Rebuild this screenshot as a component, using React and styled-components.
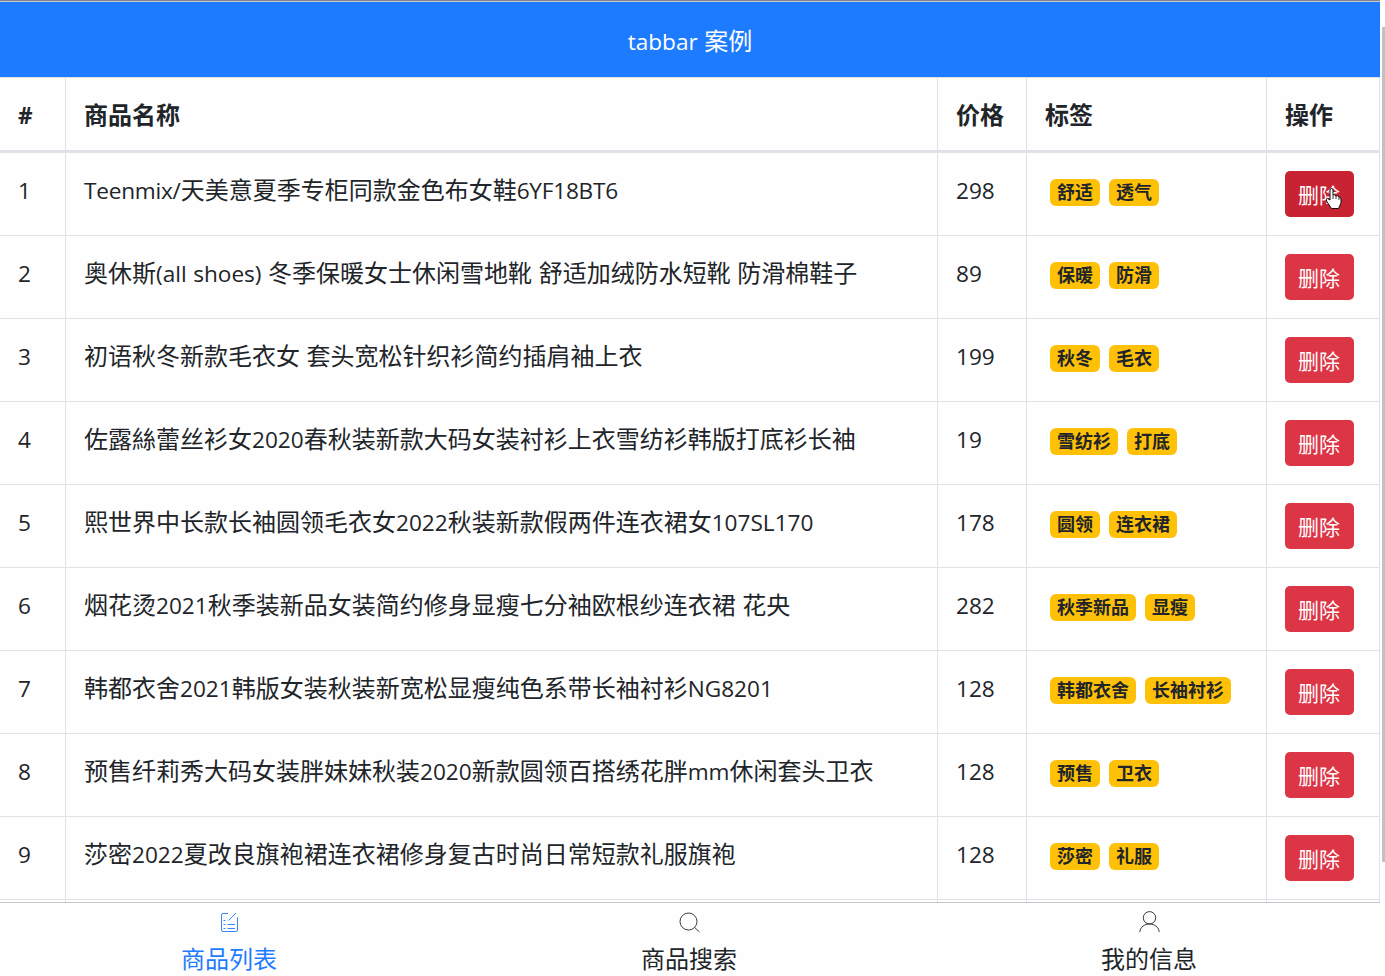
import React, { useState } from 'react';
import styled, { createGlobalStyle } from 'styled-components';

const GlobalStyle = createGlobalStyle`
  * {
    box-sizing: border-box;
  }

  body {
    margin: 0;
    background-color: #fefefe;
    color: #212529;
    font-family: 'Noto Sans CJK SC', sans-serif;
    font-size: 24px;
    line-height: 36px;
    overflow: hidden;
  }
`;

const Page = styled.div`
  display: flex;
  height: 976px;
`;

const Main = styled.div`
  display: flex;
  flex-direction: column;
  width: 1380px;
  height: 100%;
`;

const Header = styled.header`
  display: flex;
  align-items: center;
  justify-content: center;
  flex: none;
  height: 77px;
  padding-top: 1px;
  border-top: 1px solid #808488;
  box-shadow: inset 0 1px 0 #c3cad6;
  background-color: #1d7bff;
  color: white;
`;

const Content = styled.div`
  flex: 1;
  min-height: 0;
  overflow: hidden;
`;

const Table = styled.div`
  border-top: 1px solid #dee2e6;
`;

const Row = styled.div`
  display: grid;
  grid-template-columns: 66px 872px 89px 240px 113px;
  height: ${(props) => (props.$head ? '75px' : '83px')};
  border-bottom: ${(props) => (props.$head ? '3px' : '1px')} solid #dee2e6;
  font-weight: ${(props) => (props.$head ? 'bold' : 'normal')};
`;

const Cell = styled.div`
  padding: 18px 18px 0;
  border-right: 1px solid #dee2e6;
  white-space: nowrap;
`;

const TagCell = styled(Cell)`
  display: flex;
  align-items: flex-start;
  gap: 9px;
  padding: 26px 18px 0 23px;
`;

const Badge = styled.span`
  height: 27px;
  padding: 0 7px;
  border-radius: 6px;
  background-color: #ffc107;
  font-size: 18px;
  font-weight: bold;
  line-height: 25px;
`;

const DeleteButton = styled.button`
  display: block;
  width: 69px;
  height: 46px;
  padding: 0 1px 0 0;
  border: none;
  border-radius: 5px;
  background-color: ${(props) => (props.$active ? '#c82333' : '#dc3545')};
  color: white;
  font-family: inherit;
  font-size: 21px;
  line-height: 32px;
  cursor: pointer;
`;

const Latin = styled.span`
  font-family: 'Open Sans', sans-serif;
  font-size: 22.6px;
  line-height: 1;
  letter-spacing: ${(props) => props.$spacing || 'normal'};
  word-spacing: 0.7px;
  white-space: pre;
`;

const TabBar = styled.nav`
  display: flex;
  flex: none;
  height: 74px;
  border-top: 1px solid #c3c5c8;
`;

const Tab = styled.a`
  display: flex;
  flex: 1;
  flex-direction: column;
  align-items: center;
  padding: 7px 2px 0 0;
  gap: 6px;
  color: ${(props) => (props.$active ? '#1d7bff' : '#212529')};
  cursor: pointer;
`;

const TabIcon = styled.svg`
  flex: none;
  width: 24px;
  height: 24px;
  fill: none;
  stroke: currentColor;
  stroke-width: 0.9;
`;

const Scrollbar = styled.div`
  width: 5px;
  padding: 27px 0 0 2px;
`;

const Thumb = styled.div`
  height: 835px;
  background-color: #c1c1c1;
`;

const Pointer = styled.svg`
  position: absolute;
  left: 1325px;
  top: 187px;
  width: 17px;
  height: 23px;
  pointer-events: none;
`;

const goodsList = [
  { id: 1, name: 'Teenmix/天美意夏季专柜同款金色布女鞋6YF18BT6', price: 298, tags: ['舒适', '透气'], spacing: '-0.22px' },
  { id: 2, name: '奥休斯(all shoes) 冬季保暖女士休闲雪地靴 舒适加绒防水短靴 防滑棉鞋子', price: 89, tags: ['保暖', '防滑'] },
  { id: 3, name: '初语秋冬新款毛衣女 套头宽松针织衫简约插肩袖上衣', price: 199, tags: ['秋冬', '毛衣'] },
  { id: 4, name: '佐露絲蕾丝衫女2020春秋装新款大码女装衬衫上衣雪纺衫韩版打底衫长袖', price: 19, tags: ['雪纺衫', '打底'] },
  { id: 5, name: '熙世界中长款长袖圆领毛衣女2022秋装新款假两件连衣裙女107SL170', price: 178, tags: ['圆领', '连衣裙'] },
  { id: 6, name: '烟花烫2021秋季装新品女装简约修身显瘦七分袖欧根纱连衣裙 花央', price: 282, tags: ['秋季新品', '显瘦'] },
  { id: 7, name: '韩都衣舍2021韩版女装秋装新宽松显瘦纯色系带长袖衬衫NG8201', price: 128, tags: ['韩都衣舍', '长袖衬衫'] },
  { id: 8, name: '预售纤莉秀大码女装胖妹妹秋装2020新款圆领百搭绣花胖mm休闲套头卫衣', price: 128, tags: ['预售', '卫衣'] },
  { id: 9, name: '莎密2022夏改良旗袍裙连衣裙修身复古时尚日常短款礼服旗袍', price: 128, tags: ['莎密', '礼服'] },
];

const tabs = [
  {
    text: '商品列表',
    icon: (
      <>
        <path d="M11 3.500H6Q4.500 3.500 4.500 5V20Q4.500 21.500 6 21.500H19Q20.500 21.500 20.500 20V7.500" />
        <path d="M11.500 10.500L19 3M6.500 10.500H8.500M6.500 14.500H8.500M10.500 14.500H18M6.500 18.500H8.500M10.500 18.500H18" />
      </>
    ),
  },
  {
    text: '商品搜索',
    icon: (
      <>
        <circle cx="11.500" cy="11.500" r="8.500" />
        <path d="M17.700 17.500L22.500 22" />
      </>
    ),
  },
  {
    text: '我的信息',
    icon: (
      <>
        <circle cx="12.500" cy="7.800" r="6.200" />
        <path d="M2.800 22C3.300 17 7.500 14 12.500 14S21.700 17 22.200 22" />
      </>
    ),
  },
];

// latin letters and digits use their own font next to the Chinese text
function Text({ children, spacing }) {
  return String(children)
    .split(/([\x20-\x7e]+)/)
    .filter(Boolean)
    .map((part, i) =>
      /^[\x20-\x7e]/.test(part) ? <Latin key={i} $spacing={spacing}>{part}</Latin> : part
    );
}

function GoodsRow({ item, active }) {
  return (
    <Row>
      <Cell><Text>{item.id}</Text></Cell>
      <Cell><Text spacing={item.spacing}>{item.name}</Text></Cell>
      <Cell><Text>{item.price}</Text></Cell>
      <TagCell>
        {item.tags.map((tag) => (
          <Badge key={tag}>{tag}</Badge>
        ))}
      </TagCell>
      <Cell>
        <DeleteButton $active={active}>删除</DeleteButton>
      </Cell>
    </Row>
  );
}

function App() {
  const [activeTab, setActiveTab] = useState(0);

  return (
    <Page>
      <GlobalStyle />
      <Main>
        <Header>
          <div><Text>tabbar 案例</Text></div>
        </Header>
        <Content>
          <Table>
            <Row $head>
              {['#', '商品名称', '价格', '标签', '操作'].map((title) => (
                <Cell key={title}><Text>{title}</Text></Cell>
              ))}
            </Row>
            {goodsList.map((item) => (
              <GoodsRow key={item.id} item={item} active={item.id === 1} />
            ))}
            <Row>
              <Cell />
              <Cell />
              <Cell />
              <Cell />
              <Cell />
            </Row>
          </Table>
        </Content>
        <TabBar>
          {tabs.map((tab, i) => (
            <Tab key={tab.text} $active={i === activeTab} onClick={() => setActiveTab(i)}>
              <TabIcon viewBox="0 0 24 24">{tab.icon}</TabIcon>
              <span>{tab.text}</span>
            </Tab>
          ))}
        </TabBar>
      </Main>
      <Scrollbar>
        <Thumb />
      </Scrollbar>
      <Pointer viewBox="0 0 17 23">
        <path
          d="M5 13V3Q5 1.500 6.500 1.500T8 3V8Q10 7 11 9Q13 8 14 10Q16 10 16 12V16L13.500 21.500H6.500L1.500 14Q1 12 2.500 11.500Z"
          fill="#fff"
          stroke="#111"
        />
        <path d="M8 8V12M11 9V12M14 10V13" fill="none" stroke="#111" strokeWidth="0.8" />
      </Pointer>
    </Page>
  );
}

export default App;
